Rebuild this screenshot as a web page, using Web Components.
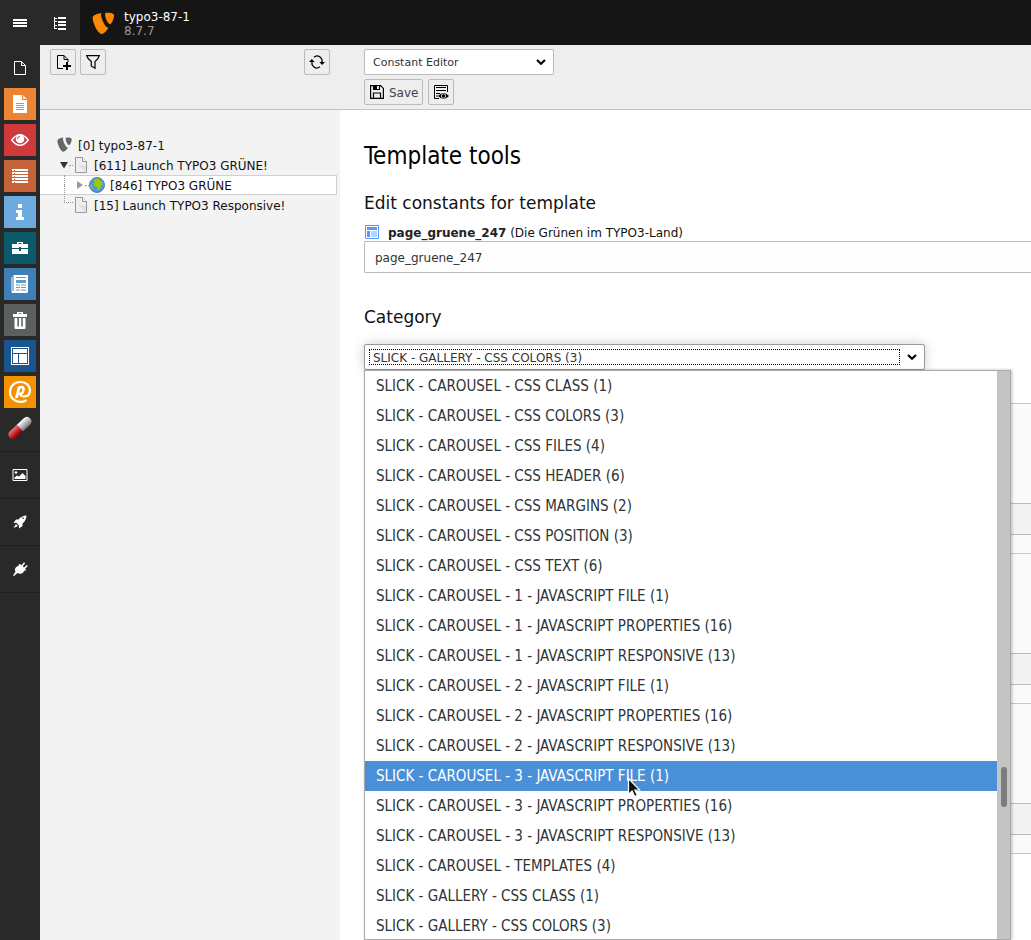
<!DOCTYPE html>
<html lang="en">
<head>
<meta charset="utf-8">
<title>typo3-87-1</title>
<style>
body{margin:0;font:12px/20px "DejaVu Sans",Verdana,sans-serif;color:#111;background:#fff}
</style>
</head>
<body>
<backend-app></backend-app>
<script>
const define = (name, html, setup) => customElements.define(name, class extends HTMLElement {
  connectedCallback() {
    if (this.shadowRoot) return;
    const t = document.createElement('template');
    t.innerHTML = html;
    this.attachShadow({mode: 'open'}).append(t.content.cloneNode(true));
    if (setup) setup(this, this.shadowRoot);
  }
});

const icons = {
  menu: ['0 0 16 16', '<path fill="currentColor" d="M1 4h14v2H1zm0 3h14v2H1zm0 3h14v2H1z"/>'],
  tree: ['0 0 16 16', '<path fill="currentColor" d="M2 2h1v12H2zM3 3h2v1H3zm0 3h2v1H3zm0 4h2v1H3zm0 3h2v1H3zM6 2h8v2H6zm0 4h8v2H6zm0 3h8v2H6zm0 4h8v2H6z"/>'],
  shield: ['0 0 16 16', '<path fill="currentColor" d="M11.100 10.300c-.2.100-.4.100-.6.100-1.800 0-4.500-6.400-4.500-8.500 0-.8.200-1 .4-1.300C4.200.9 1.500 1.700.7 2.800.500 3 .4 3.400.4 3.900c0 3.300 3.500 10.800 6 10.800 1.200 0 3.200-1.900 4.700-4.400M10 .5c2.300 0 4.700.4 4.700 1.700 0 2.700-1.700 5.900-2.600 5.900-1.500 0-3.400-4.200-3.400-6.400C8.700.7 9.100.5 10 .5"/>'],
  page: ['0 0 16 16', '<path fill="none" stroke="currentColor" d="M2.500 1.500h7l4 4v9h-11zM9.500 1.500v4h4"/>'],
  treepage: ['0 0 16 16', '<path fill="#efefef" stroke="#999" d="M2.500.5h7l4 4v11h-11z"/><path fill="#ccc" d="M5 8l8 7V9z" opacity=".45"/><path fill="#fff" stroke="#999" d="M9.500.5v4h4"/>'],
  doc: ['0 0 18 18', '<path fill="#fff" d="M2 0h9v5h5v13H2z"/><path fill="#fff" opacity=".75" d="M12 0l4 4h-4z"/><path stroke="#ed8433" d="M5 8.500h8M5 10.500h8M5 12.500h8M5 14.500h8"/>'],
  eye: ['0 0 18 18', '<path fill="none" stroke="#fff" stroke-width="1.500" d="M.8 9Q9-1.500 17.200 9 9 19.500.8 9z"/><circle cx="9" cy="8" r="4.300" fill="#fff"/><path fill="none" stroke="#d03a3c" d="M6.500 8Q6.500 5.500 9 5.500"/>'],
  list: ['0 0 18 18', '<path fill="#fff" d="M1 2h16v2H1zm0 3h16v2H1zm0 3h16v2H1zm0 3h16v2H1zm0 3h16v2H1z"/><path stroke="#c5643a" d="M3.500 2v15" stroke-dasharray="1 2" stroke-dashoffset="-1"/>'],
  info: ['0 0 18 18', '<path fill="#fff" d="M7 1h4v4H7zM5 7h6v7h2v3H5v-3h2v-4H5z"/>'],
  briefcase: ['0 0 18 18', '<path fill="#fff" d="M1 5h5V3h6v2h5v4h-7V8H8v1H1zM7.500 4v1h3V4zM1 10h7v2h2v-2h7v5H1z"/>'],
  news: ['0 0 18 18', '<path fill="#fff" d="M2.500 0H17v16.500q0 1.500-2 1.500H2q-1.500 0-1.500-1.500V2h1v14h1z"/><path fill="#3f80b8" d="M5 2h10v1H5zM5 5h10v3H5zm0 4.500h4v1H5zm5 0h5v1h-5zM5 12h4v1H5zm5 0h5v1h-5zm-5 2.500h4v1H5zm5 0h5v1h-5z" opacity=".8"/>'],
  trash: ['0 0 18 18', '<path fill="#fff" fill-rule="evenodd" d="M2 3h4V1h6v2h4v3H2zM7.500 2.200V3h3v-.8zM3.500 7h11v10q0 1-1 1h-9q-1 0-1-1z"/><path stroke="#5b5f60" stroke-width="1.500" d="M7.200 7v8.500M11 7v8.500"/>'],
  template: ['0 0 18 18', '<path fill="none" stroke="#fff" d="M.5.500h17v17H.5z"/><path fill="#fff" d="M2 2h14v4H2zm0 5h5v9H2zm6 0h8v9H8z"/>'],
  at: ['0 0 24 24', '<g fill="none" stroke="#fff" stroke-width="2.200"><path d="M18.500 20.200C13 24 2 21 2 12 2 6 6.500 2 12.500 2 18 2 22 5.500 22 10c0 5-2.500 6.500-6 6.500-2.500 0-4-1.500-4-1.500"/><path d="M11.300 6.500L8.300 18" stroke-width="2.800"/><path d="M11 8.500c1.500-2.500 5-2 4.500 1.500-.5 4-4 5-5.500 3" stroke-width="2.500"/></g>'],
  pill: ['0 0 24 24', '<defs><linearGradient id="a" x2="0" y2="1"><stop stop-color="#fff"/><stop offset="1" stop-color="#777"/></linearGradient><linearGradient id="b" x2="0" y2="1"><stop stop-color="#ef7777"/><stop offset=".6" stop-color="#b91f25"/><stop offset="1" stop-color="#700"/></linearGradient></defs><g transform="rotate(-43 12 12)"><path fill="url(#b)" d="M13 7.500H3Q-2 7.500-2 12t5 4.500h10z"/><path fill="url(#a)" d="M12 7.500h9q5 0 5 4.500t-5 4.500h-9z"/></g>'],
  image: ['0 0 16 16', '<path fill="none" stroke="currentColor" d="M1 2.500h14v11H1z"/><circle cx="4" cy="5.500" r="1.300" fill="currentColor"/><path fill="currentColor" d="M2.500 12V10.500L5 8.500l2 1L10.500 6 13.500 9v3z"/>'],
  rocket: ['0 0 16 16', '<path fill="currentColor" fill-rule="evenodd" d="M14.500 1.500Q9.500 1.800 6.500 5.500H4L1.500 9l3-.2L7 11.500 7 14.500l3.500-2.500V9.500Q14.200 6.500 14.500 1.500zM11 5a.8.8 0 1 1 .1 0zM4 10l-2.500 4L6 12z"/>'],
  plug: ['0 0 16 16', '<path fill="currentColor" d="M9.500 4.300L12 1.300l1.200 1-2.500 3 1.300 1.200 2.800-2.600 1 1.200-2.700 2.700 1 1.200-1 .8-1-.2C11.500 13 8 13.500 5.500 12L2 15 1 14.500 3.500 10.500C2 8 4 5.500 6.500 5L6.700 3.500 8 3z"/>'],
  newpage: ['0 0 16 16', '<path fill="none" stroke="currentColor" d="M8 14.500H2.500v-13H9l4 4V8M9 1.500v4h4"/><path stroke="currentColor" stroke-width="2" d="M12 8v8M8 12h8"/>'],
  filter: ['0 0 16 16', '<path fill="none" stroke="currentColor" stroke-width="1.200" d="M1.700 1.600h12.600q-.6 3-4.300 6v6.600L6.300 12V7.600Q2.300 4.600 1.700 1.600z"/>'],
  refresh: ['0 0 16 16', '<path fill="none" stroke="currentColor" stroke-width="1.300" d="M5 3.200Q10-.3 13 5.500V8M11 12.800Q6 16.300 3 10.500V8"/><path fill="currentColor" d="M10.300 8H16l-2.900 3zM0 8h5.700L2.800 5z"/>'],
  save: ['0 0 16 16', '<path fill="none" stroke="currentColor" stroke-width="1.200" d="M1.600 1.600h10l2.800 2.800v10H1.600zM4.500 14V9h7v5"/><path fill="currentColor" d="M4 1h7v5H4z"/><path fill="#eee" d="M8 2h2v3H8z"/>'],
  view: ['0 0 16 16', '<path fill="none" stroke="currentColor" d="M6 14.500H1.500v-13h13V8M3 3.500h10M3 6.500h10M3 9.500h4M3 12h2"/><path fill="currentColor" d="M5 12q5.500-6 11 0-5.500 6-11 0z"/><circle cx="10.500" cy="12" r="2.200" fill="none" stroke="#eee" stroke-width=".8"/>'],
  record: ['0 0 16 16', '<path fill="#fff" stroke="#59f" d="M1.500 1.500h13v13h-13z"/><path fill="#59f" d="M3 3h10v3H3z"/><path fill="#59f" d="M3 7h3v6H3z"/><path fill="#acd6ff" d="M7 7h6v6H7z"/>'],
  globe: ['0 0 16 16', '<circle cx="8" cy="8" r="7.500" fill="#5294e2" stroke="#4880bd"/><path fill="#9c0" d="M4.500 3Q7 .8 10.500 1.500L10 3l2.500 1L14 7.500 12 9l-1 2.500L8.500 14 8 10 5.500 9 4.500 6.500 6 5z"/><path fill="#9c0" d="M1 7l2 1.500 1.500 4Q1.500 11 1 7z"/>'],
  down: ['0 0 10 10', '<path fill="#333" d="M1 2h8L5 8.500z"/>'],
  right: ['0 0 10 10', '<path fill="#999" d="M2 1l6 4-6 4z"/>'],
  chevron: ['0 0 10 10', '<path fill="none" stroke="#000" stroke-width="2.200" d="M1 3l4 3.700L9 3"/>'],
  pointer: ['0 0 14 22', '<path fill="#111" stroke="#fff" stroke-width="1.200" d="M1.500 1.500v16l3.600-3.400 2.600 5.400 2.700-1.300-2.600-5.200h4.900z"/>'],
};
define('ui-icon', `<style>:host{display:block;flex:none;width:16px;height:16px}svg{display:block;width:100%;height:100%}</style><svg aria-hidden="true"></svg>`, (el, root) => {
  const [box, body] = icons[el.getAttribute('name')];
  const svg = root.querySelector('svg');
  svg.setAttribute('viewBox', box);
  svg.innerHTML = body;
});

define('tool-button', `<style>
:host{display:block}
button{display:flex;align-items:center;gap:4px;box-sizing:border-box;height:26px;min-width:26px;margin:0;padding:0 4px;border:1px solid #bbb;border-radius:2px;background:#eee;color:#000;font:inherit}
::slotted(span){color:#444;padding-top:1px}
</style><button type="button"><slot></slot></button>`, (el, root) => {
  const button = root.querySelector('button'), icon = document.createElement('ui-icon');
  icon.setAttribute('name', el.getAttribute('icon'));
  button.prepend(icon);
  button.setAttribute('aria-label', el.getAttribute('label'));
});

define('top-bar', `<style>
:host{display:flex;height:45px;background:#151515;color:#fff}
button{width:40px;border:0;padding:0 12px;background:#292929;color:#fff}
.logo{width:24px;height:24px;margin:12px 8px 0 12px;color:#ff8700}
.site{padding-top:10px;line-height:14px}
.site div+div{color:#999}
</style>
<button type="button" aria-label="Menu"><ui-icon name="menu"></ui-icon></button>
<button type="button" aria-label="Page tree"><ui-icon name="tree"></ui-icon></button>
<ui-icon class="logo" name="shield"></ui-icon>
<div class="site"><div>typo3-87-1</div><div>8.7.7</div></div>`);

define('module-menu', `<style>
:host{display:block;background:#292929;color:#fff;padding-top:7px}
nav{display:flex;flex-direction:column;align-items:center}
a{display:flex;align-items:center;justify-content:center;width:32px;height:32px;margin-bottom:4px;color:#fff}
.tile ui-icon{width:18px;height:18px}
.big ui-icon{width:24px;height:24px}
.group{width:40px;height:46px;margin:0;border-top:1px solid #202020}
.first{margin-top:3px}
.end{width:40px;border-top:1px solid #202020}
</style><nav></nav>`, (el, root) => {
  const items = [['page','','Web'],['doc','#ed8433','Page'],['eye','#d03a3c','View'],['list','#c5643a','List'],['info','#6daae0','Info'],['briefcase','#0a5a6a','Functions'],['news','#3f80b8','News'],['trash','#5b5f60','Recycler'],['template','#1b558f','Template'],['at','#f39200','Powermail'],['pill','','Quick Shop'],['image','','File'],['rocket','','Admin tools'],['plug','','System']];
  root.querySelector('nav').innerHTML = items.map(([n, c, l], i) => `<a href="#" aria-label="${l}" class="${i > 10 ? 'group' : (n === 'at' || n === 'pill') ? 'big' : c ? 'tile' : ''}${i === 11 ? ' first' : ''}" ${c ? `style="background:${c}"` : ''}><ui-icon name="${n}"></ui-icon></a>`).join('') + '<div class="end"></div>';
});

define('page-tree', `<style>
:host{display:flex;flex-direction:column;background:#f3f3f3}
header{display:flex;gap:4px;box-sizing:border-box;height:65px;padding:4px 10px;background:#eee;border-bottom:1px solid #c3c3c3}
.push{margin-left:auto}
ul{list-style:none;margin:0;padding:25px 3px 0 0}
li{display:flex;align-items:center;box-sizing:border-box;height:20px;padding-left:17px}
li.sub{padding-left:19px}
li.sel{background:#fff;border:1px solid #d0d0d0;border-left:0;padding-left:24px}
a{color:#111;text-decoration:none;margin-left:5px;padding-top:1px}
.arrow{width:10px;height:10px}
.dots{width:4px;border-top:1px dotted #999}
.corner{width:9px;height:18px;border:dotted #999;border-width:0 0 1px 1px;align-self:flex-start;margin-top:-10px;margin-left:5px;box-sizing:border-box}
.rail{border-left:1px dotted #999;height:20px;margin-right:10px}
</style>
<header><tool-button icon="newpage" label="New page"></tool-button><tool-button icon="filter" label="Filter"></tool-button><tool-button class="push" icon="refresh" label="Refresh"></tool-button></header>
<ul>
<li><ui-icon name="shield" style="color:#666"></ui-icon><a href="#">[0] typo3-87-1</a></li>
<li class="sub"><ui-icon class="arrow" name="down"></ui-icon><span class="dots"></span><ui-icon name="treepage"></ui-icon><a href="#">[611] Launch TYPO3 GRÜNE!</a></li>
<li class="sel"><span class="rail"></span><ui-icon class="arrow" name="right"></ui-icon><span class="dots"></span><ui-icon name="globe"></ui-icon><a href="#">[846] TYPO3 GRÜNE</a></li>
<li class="sub"><span class="corner"></span><ui-icon name="treepage"></ui-icon><a href="#">[15] Launch TYPO3 Responsive!</a></li>
</ul>`);

define('select-box', `<style>
:host{display:block;position:relative;height:26px;font-size:11px}
:host([focused]){font-size:12px}
select{appearance:none;display:block;box-sizing:border-box;width:100%;height:26px;margin:0;padding:2px 8px 0;border:1px solid #bbb;border-radius:2px;background:#fff;color:#333;font:inherit;line-height:22px;outline:0}
ui-icon{position:absolute;right:8px;top:8px;width:10px;height:10px;pointer-events:none}
:host([focused]) select{box-shadow:0 0 12px rgba(0,0,0,.2);border-color:#999}
:host([focused])::after{content:"";position:absolute;inset:5px 25px 5px 5px;border:1px dotted #000;pointer-events:none}
</style><select><option></option></select><ui-icon name="chevron"></ui-icon>`, (el, root) => {
  root.querySelector('option').textContent = el.getAttribute('value');
  root.querySelector('select').setAttribute('aria-label', el.getAttribute('label'));
});

define('option-list', `<style>
:host{display:flex;position:absolute;z-index:2;box-sizing:border-box;border:1px solid #aaa;background:#fff;overflow:hidden;box-shadow:1px 0 3px rgba(0,0,0,.25)}
ul{flex:1;list-style:none;margin:0;padding:0;font:15px/30px "DejaVu Sans Condensed","DejaVu Sans",sans-serif;color:#2e3436}
li{height:30px;padding-left:11px;white-space:nowrap}
li.on{background:#4a90d9;color:#fff}
.bar{width:13px;background:#c3c5c4;display:flex;flex-direction:column;align-items:center}
.thumb{width:6px;height:40px;border-radius:3px;background:#7b7e7d;margin-top:396px}
</style><ul role="listbox" aria-label="Category"></ul><div class="bar"><div class="thumb"></div></div>`, (el, root) => {
  const js = n => [`${n} - JAVASCRIPT FILE (1)`, `${n} - JAVASCRIPT PROPERTIES (16)`, `${n} - JAVASCRIPT RESPONSIVE (13)`];
  const rows = ['CSS CLASS (1)','CSS COLORS (3)','CSS FILES (4)','CSS HEADER (6)','CSS MARGINS (2)','CSS POSITION (3)','CSS TEXT (6)',...js(1),...js(2),...js(3),'TEMPLATES (4)'].map(s => 'SLICK - CAROUSEL - ' + s).concat('SLICK - GALLERY - CSS CLASS (1)','SLICK - GALLERY - CSS COLORS (3)');
  root.querySelector('ul').innerHTML = rows.map((r, i) => `<li role="option" aria-selected="${i === 13}"${i === 13 ? ' class="on"' : ''}>${r}</li>`).join('');
});

define('constant-panel', `<style>
:host{display:block;background:#fafafa;border-top:1px solid #c8c8c8}
.body{height:99px}.head{height:30px;background:#f3f3f3;border:solid #bbb;border-width:1px 0}.foot{height:18px}
</style><div class="body"></div><div class="head"></div><div class="foot"></div>`);

define('template-module', `<style>
:host{display:block;background:#fff;position:relative}
header{box-sizing:border-box;height:65px;padding:4px 24px;background:#eee;border-bottom:1px solid #c3c3c3}
.mode{width:190px}
.row{display:flex;gap:5px;margin-top:4px}
main{padding:30px 0 0 24px}
h1{margin:0;font:500 24px/32px "DejaVu Sans Condensed","DejaVu Sans",sans-serif;color:#000}
h2{margin:0;font-size:17px;font-weight:400;line-height:24px;color:#111}
.edit{margin-top:19px}
.name{display:flex;align-items:center;margin-top:8px;line-height:18px;height:18px;white-space:pre}
.name ui-icon{margin-right:8px}
.name span{padding-top:2px}
b{color:#222}
input{display:block;box-sizing:border-box;width:100%;height:32px;margin:0;padding:2px 10px 0;border:1px solid #bbb;border-right:0;border-radius:2px 0 0 2px;background:#fefefe;color:#333;font:inherit}
.cat{margin:32px 0 15px}
.pick{position:relative}
.pick select-box{width:561px;max-width:100%}
option-list{top:26px;left:0;right:20px;height:570px}
.panels{margin-top:33px;border-bottom:1px solid #c8c8c8}
.pointer{position:absolute;z-index:3;width:14px;height:22px;left:263px;top:433px}
</style>
<header><select-box class="mode" value="Constant Editor" label="Mode"></select-box>
<div class="row"><tool-button icon="save" label="Save"><span>Save</span></tool-button><tool-button icon="view" label="Save and view"></tool-button></div></header>
<main><h1>Template tools</h1>
<h2 class="edit">Edit constants for template</h2>
<div class="name"><ui-icon name="record"></ui-icon><span><b>page_gruene_247</b> (Die Grünen im TYPO3-Land)</span></div>
<input type="text" value="page_gruene_247" aria-label="Template">
<h2 class="cat">Category</h2>
<div class="pick"><select-box focused value="SLICK - GALLERY - CSS COLORS (3)" label="Category"></select-box><option-list></option-list><ui-icon class="pointer" name="pointer"></ui-icon></div>
<div class="panels"><constant-panel></constant-panel><constant-panel></constant-panel><constant-panel></constant-panel></div></main>`);

define('backend-app', `<style>
:host{display:grid;grid-template:45px 1fr / 40px 300px minmax(0,1fr);height:100vh;overflow:hidden}
top-bar{grid-column:1 / -1}
</style><top-bar></top-bar><module-menu></module-menu><page-tree></page-tree><template-module></template-module>`);
</script>
</body>
</html>
